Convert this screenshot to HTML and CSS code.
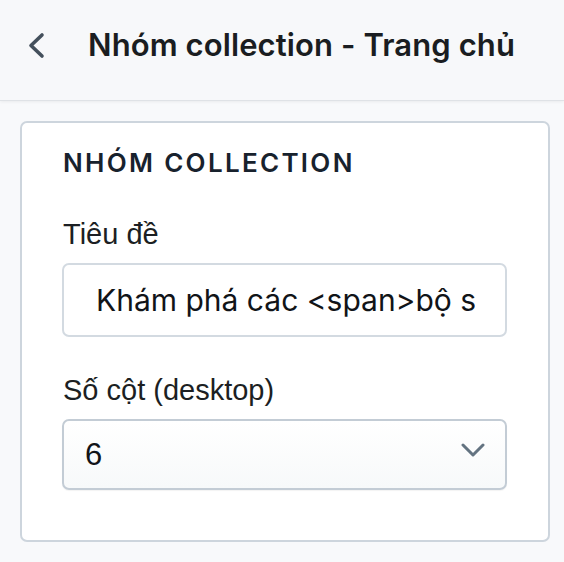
FILE: index.html
```html
<!DOCTYPE html>
<html lang="vi">
<head>
<meta charset="utf-8">
<title>Nhóm collection - Trang chủ</title>
<link rel="stylesheet" href="styles.css">
</head>
<body>
<header class="topbar">
  <button class="back" type="button" aria-label="Quay lại">
    <svg width="20" height="28" viewBox="0 0 20 28" aria-hidden="true"><polyline points="15,4 4,14.5 15,25" fill="none" stroke="#44505c" stroke-width="3.6" stroke-linecap="round" stroke-linejoin="round"/></svg>
  </button>
  <h1 class="title">Nhóm collection - Trang chủ</h1>
</header>
<main class="main">
  <section class="card">
    <h2 class="card-heading">NHÓM COLLECTION</h2>
    <label class="field-label" for="title">Tiêu đề</label>
    <input class="text-input" id="title" type="text" value="Khám phá các <span>bộ sưu tập</span>">
    <div class="field-label field-label-second">Số cột (desktop)</div>
    <div class="select">
      <span class="select-value">6</span>
      <svg class="select-chevron" width="24" height="16" viewBox="0 0 24 16" aria-hidden="true"><polyline points="2,3 12,13 22,3" fill="none" stroke="#637381" stroke-width="3" stroke-linecap="round" stroke-linejoin="round"/></svg>
    </div>
  </section>
</main>
</body>
</html>
```

FILE: styles.css
```css
* { box-sizing: border-box; }

html, body {
  margin: 0;
  padding: 0;
}

body {
  background: #f8f9fb;
  font-family: Inter, "Noto Sans", sans-serif;
  color: #1b1f24;
  width: 564px;
  height: 562px;
  overflow: hidden;
}

.topbar {
  height: 101px;
  display: flex;
  align-items: center;
  padding: 0 0 11px 27px;
  background: #f7f8fa;
  border-bottom: 1px solid #dfe2e6;
  box-shadow: 0 1px 3px rgba(0, 0, 0, 0.06);
}

.back {
  display: flex;
  align-items: center;
  justify-content: center;
  padding: 0;
  margin: 0;
  border: 0;
  background: none;
  width: 20px;
  height: 28px;
}

.title {
  margin: 0 0 0 41px;
  font-size: 31px;
  font-weight: 600;
  line-height: 36px;
  color: #1a1d21;
  letter-spacing: 0.1px;
  white-space: nowrap;
}

.main {
  padding: 20px 14px 20px 20px;
}

.card {
  width: 530px;
  height: 421px;
  background: #ffffff;
  border: 2px solid #cdd5dd;
  border-radius: 7px;
  padding: 25px 41px 0 40px;
  display: flex;
  flex-direction: column;
}

.card-heading {
  margin: 0 0 40px 1px;
  font-size: 26px;
  line-height: 30px;
  font-weight: 600;
  letter-spacing: 2.3px;
  color: #18222d;
}

.field-label {
  display: block;
  font-family: "Liberation Sans", Arial, sans-serif;
  font-size: 29px;
  line-height: 32px;
  color: #1c1f23;
  margin: 0 0 13px 1px;
}

.field-label-second {
  margin-top: 37px;
  margin-bottom: 13px;
}

.text-input {
  display: block;
  width: 445px;
  height: 74px;
  margin: 0;
  padding: 0 30px 0 32px;
  border: 2px solid #d3dae1;
  border-radius: 7px;
  background: #ffffff;
  font-family: Inter, "Noto Sans", sans-serif;
  font-size: 30px;
  color: #111418;
  outline: none;
}

.select {
  width: 445px;
  height: 71px;
  display: flex;
  align-items: center;
  justify-content: space-between;
  padding: 0 20px 0 21px;
  border: 2px solid #c3ccd5;
  border-radius: 7px;
  background: linear-gradient(#ffffff, #f7f9fa);
  box-shadow: 0 1px 1px rgba(0, 0, 0, 0.05);
}

.select-value {
  font-family: "Liberation Sans", Arial, sans-serif;
  font-size: 31px;
  color: #111418;
  line-height: 34px;
}

.select-chevron {
  display: block;
  margin-top: -10px;
}
```
